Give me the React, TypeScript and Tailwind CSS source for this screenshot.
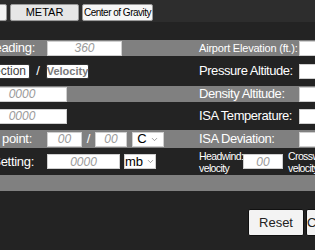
import { ChevronDown } from "lucide-react";

const font = { fontFamily: "'Liberation Sans', Arial, sans-serif" };

function Field({ ph, w, h = "h-[15px]" }: { ph: string; w: string; h?: string }) {
  return (
    <input
      readOnly
      placeholder={ph}
      className={`${w} ${h} shrink-0 bg-white border border-[#cfcfcf] text-center text-[12px] italic outline-none placeholder:text-[#9a9a9a] placeholder:italic`}
    />
  );
}

function Pick({ label, w }: { label: string; w: string }) {
  return (
    <div className={`${w} h-[15px] shrink-0 bg-white border border-[#cfcfcf] flex items-center justify-center gap-[3px] text-[13px] text-black`}>
      {label}
      <ChevronDown size={9} strokeWidth={1.5} className="text-[#555]" />
    </div>
  );
}

function RightLabel({ text, small }: { text: string; small?: boolean }) {
  return (
    <div
      className={`w-[100px] shrink-0 whitespace-nowrap text-white ${
        small ? "text-[11px] tracking-[-0.2px]" : "text-[13px] tracking-[-0.45px]"
      }`}
    >
      {text}
    </div>
  );
}

// left labels run off the left edge; end = where the text stops
function LeftLabel({ text, end }: { text: string; end: string }) {
  return (
    <div className={`${end} shrink-0 flex justify-end`}>
      <span className="whitespace-nowrap text-white text-[13px] tracking-[-0.3px]">{text}</span>
    </div>
  );
}

export default function App() {
  return (
    <div className="w-[315px] h-[250px] overflow-hidden bg-[#232323] text-white" style={font}>
      {/* tab bar */}
      <div className="h-[22px] bg-[#2d2d2d] flex items-end pb-[1px] gap-[3px] -ml-[60px]">
        <div className="w-[67px] h-[17px] shrink-0 bg-[#f4f4f4] border border-[#9a9a9a] rounded-[2px]" />
        <div className="w-[69px] h-[17px] shrink-0 bg-[#e6e6e6] border border-[#9a9a9a] rounded-[2px] flex items-center justify-center text-[11px] text-black">
          METAR
        </div>
        <div className="w-[71px] h-[17px] shrink-0 bg-[#f6f6f6] border border-[#9a9a9a] rounded-[2px] flex items-center justify-center text-[10px] text-black whitespace-nowrap tracking-[-0.5px]">
          Center of Gravity
        </div>
      </div>
      <div className="h-[18px]" />

      {/* heading */}
      <div className="h-[16px] bg-[#808080] flex items-center">
        <div className="w-[199px] shrink-0 flex items-center">
          <LeftLabel text="Heading:" end="w-[35px]" />
          <div className="w-[12px] shrink-0" />
          <Field ph="360" w="w-[75px]" />
        </div>
        <RightLabel text="Airport Elevation (ft.):" small />
        <Field ph="" w="w-[40px]" />
      </div>

      {/* wind */}
      <div className="h-[30px] flex items-center">
        <div className="w-[199px] shrink-0 flex items-center">
          <div className="w-[30px] shrink-0 flex justify-end">
            <div className="h-[15px] px-[3px] bg-white border border-[#333] rounded-[2px] flex items-center text-[12px] text-[#444] whitespace-nowrap">
              Direction
            </div>
          </div>
          <span className="w-[16px] shrink-0 text-center text-[13px]">/</span>
          <div className="w-[43px] h-[15px] shrink-0 bg-white border border-[#333] rounded-[2px] flex items-center justify-center text-[11px] font-bold text-[#7a7a7a]">
            Velocity
          </div>
        </div>
        <RightLabel text="Pressure Altitude:" />
        <Field ph="" w="w-[40px]" />
      </div>

      <div className="h-[16px] bg-[#808080] flex items-center">
        <div className="w-[199px] shrink-0 flex items-center">
          <div className="w-[67px] shrink-0 flex justify-end">
            <Field ph="0000" w="w-[90px]" />
          </div>
        </div>
        <RightLabel text="Density Altitude:" />
        <Field ph="" w="w-[40px]" />
      </div>

      <div className="h-[28px] flex items-center">
        <div className="w-[199px] shrink-0 flex items-center">
          <div className="w-[67px] shrink-0 flex justify-end">
            <Field ph="0000" w="w-[90px]" />
          </div>
        </div>
        <RightLabel text="ISA Temperature:" />
        <Field ph="" w="w-[40px]" />
      </div>

      {/* dew point */}
      <div className="h-[18px] bg-[#808080] flex items-center">
        <div className="w-[199px] shrink-0 flex items-center">
          <LeftLabel text="Temp / Dew point:" end="w-[32px]" />
          <div className="w-[15px] shrink-0" />
          <Field ph="00" w="w-[35px]" />
          <span className="w-[13px] shrink-0 text-center text-[13px]">/</span>
          <Field ph="00" w="w-[32px]" />
          <div className="w-[5px] shrink-0" />
          <Pick label="C" w="w-[32px]" />
        </div>
        <RightLabel text="ISA Deviation:" />
        <Field ph="" w="w-[40px]" />
      </div>

      {/* altimeter */}
      <div className="h-[27px] flex items-center">
        <div className="w-[199px] shrink-0 flex items-center">
          <LeftLabel text="Altimeter Setting:" end="w-[34px]" />
          <div className="w-[13px] shrink-0" />
          <Field ph="0000" w="w-[73px]" />
          <div className="w-[4px] shrink-0" />
          <Pick label="mb" w="w-[32px]" />
        </div>
        <div className="w-[44px] shrink-0 whitespace-nowrap text-[10.5px] leading-[12px] tracking-[-0.6px] text-white">
          Headwind:
          <br />
          velocity
        </div>
        <Field ph="00" w="w-[40px]" />
        <div className="w-[5px] shrink-0" />
        <div className="shrink-0 whitespace-nowrap text-[10.5px] leading-[12px] tracking-[-0.6px] text-white">
          Crosswind:
          <br />
          velocity
        </div>
      </div>

      <div className="h-[16px] bg-[#808080]" />

      {/* actions */}
      <div className="flex pt-[18px] pl-[248px] gap-[2px]">
        <div className="w-[56px] h-[27px] shrink-0 bg-[#f3f3f3] border border-[#111] rounded-[2px] flex items-center justify-center text-[13px] text-[#222]">
          Reset
        </div>
        <div className="w-[56px] h-[27px] shrink-0 bg-[#f3f3f3] border border-[#111] rounded-[2px] flex items-center justify-center text-[13px] text-[#222]">
          Calculate
        </div>
      </div>
    </div>
  );
}
